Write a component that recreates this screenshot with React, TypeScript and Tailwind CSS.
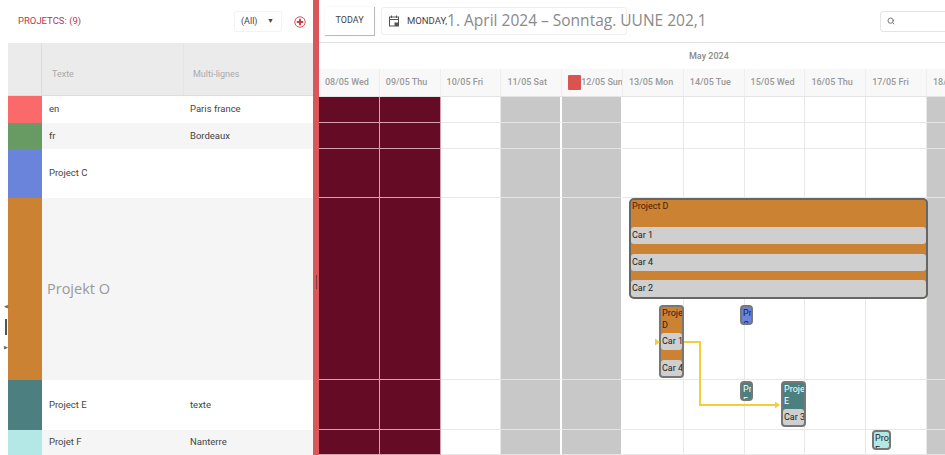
import { Search } from "lucide-react";

const rows = [
  { color: "bg-[#fb6a6a]", height: "h-[27px]", name: "en", city: "Paris france", alt: false },
  { color: "bg-[#689a64]", height: "h-[26px]", name: "fr", city: "Bordeaux", alt: true },
  { color: "bg-[#6a84dc]", height: "h-[49px]", name: "Project C", city: "", alt: false },
  { color: "bg-[#cc8233]", height: "h-[182px]", name: "Projekt O", city: "", alt: true, big: true },
  { color: "bg-[#4c7f80]", height: "h-[50px]", name: "Project E", city: "texte", alt: false },
  { color: "bg-[#b3e8e6]", height: "h-[25px]", name: "Projet F", city: "Nanterre", alt: true },
];

const days = [
  { label: "08/05 Wed", kind: "off" },
  { label: "09/05 Thu", kind: "off" },
  { label: "10/05 Fri", kind: "day" },
  { label: "11/05 Sat", kind: "weekend" },
  { label: "12/05 Sun", kind: "weekend", flag: true },
  { label: "13/05 Mon", kind: "day" },
  { label: "14/05 Tue", kind: "day" },
  { label: "15/05 Wed", kind: "day" },
  { label: "16/05 Thu", kind: "day" },
  { label: "17/05 Fri", kind: "day" },
  { label: "18/05 Sat", kind: "weekend" },
];

function Toolbar() {
  return (
    <div className="h-[43px] flex items-center border-b border-[#e2e2e2] pl-[6px]">
      <button className="h-[29px] w-[50px] border-r border-b border-[#bbb] text-[9px] text-[#444] shadow-[0_0_2px_#eee]">TODAY</button>
      <div className="ml-[6px] h-[28px] w-[246px] shrink-0 flex items-center border border-[#eee] rounded-[3px] pl-[6px] whitespace-nowrap overflow-visible">
        <svg width="12" height="12" viewBox="0 0 12 12" className="shrink-0 text-[#555]" fill="none" stroke="currentColor">
          <rect x="1.5" y="2" width="9" height="9" />
          <path d="M1.5 4.5h9M3.5 .5v2.5M8.5 .5v2.5" />
          <rect x="7" y="8" width="2.5" height="2.5" fill="currentColor" />
        </svg>
        <span className="ml-[7px] text-[9.5px] text-[#444]">MONDAY,</span>
        <span className="text-[15.5px] text-[#8a8a8a] font-['Open_Sans',sans-serif]">1. April 2024 – Sonntag. UUNE 202,1</span>
      </div>
      <div className="ml-auto w-[66px] -mr-[1px] h-[21px] shrink-0 flex items-center border border-[#e4e4e4] rounded-l-[3px] pl-[6px]">
        <Search size={8} strokeWidth={3} className="text-[#777]" />
      </div>
    </div>
  );
}

function Tile({ className, title, light, items = [] }: { className: string; title: string; light?: boolean; items?: { label: string; top: string }[] }) {
  return (
    <div className={`absolute overflow-hidden rounded-[4px] border-2 border-[#777] text-[9px] leading-[12px] ${light ? "text-white" : "text-[#222]"} ${className}`}>
      <div className="pl-[1px]">{title}</div>
      {items.map((item) => (
        <div key={item.label} className={`absolute left-0 right-0 h-[17px] rounded-[3px] bg-[#cfcfcf] pl-[1px] leading-[17px] whitespace-nowrap text-[#222] ${item.top}`}>
          {item.label}
        </div>
      ))}
    </div>
  );
}

function Timeline() {
  return (
    <div className="relative flex-1 overflow-hidden">
      <div className="h-[26px] pl-[370px] leading-[26px] text-[9px] font-medium text-[#888]">May 2024</div>
      <div className="flex h-[28px] w-[680px] bg-[#f8f8f8] border-b border-[#e4e4e4]">
        {days.map((day) => (
          <div
            key={day.label}
            className={`relative w-[60.8px] shrink-0 border-r border-[#eee] whitespace-nowrap leading-[27px] text-[9px] font-medium text-[#999] overflow-hidden ${day.flag ? "pl-[19px]" : "pl-[6px]"}`}
          >
            {day.flag && <span className="absolute left-[6px] top-[6px] h-[15px] w-[13px] rounded-[1px] bg-[#d9534f]" />}
            {day.label}
          </div>
        ))}
      </div>
      <div className="w-[680px]">
        {rows.map((row, i) => (
          <div key={row.name} className={`flex ${i === 0 ? "h-[26px]" : row.height}`}>
            {days.map((day) => (
              <div
                key={day.label}
                className={`w-[60.8px] shrink-0 ${
                  day.kind === "off"
                    ? "bg-[#660b26] border-r border-b border-[#d5a3b0]"
                    : day.kind === "weekend"
                      ? "bg-[#c8c8c8] border-r-2 border-b border-r-white border-b-[#e4e4e4]"
                      : "border-r border-b border-[#e8e8e8]"
                }`}
              />
            ))}
          </div>
        ))}
      </div>

      <div className="absolute left-[310px] top-[155px] h-[101px] w-[299px] overflow-hidden rounded-[5px] border-2 border-[#666] bg-[#cc8233] text-[9px] text-[#222]">
        <div className="h-[27px] pl-[1px] text-[#4a1c00] leading-[12px]">Project D</div>
        <div className="flex flex-col gap-[9.5px]">
          <div className="h-[17px] rounded-[3px] bg-[#cfcfcf] pl-[1px] leading-[17px]">Car 1</div>
          <div className="h-[17px] rounded-[3px] bg-[#cfcfcf] pl-[1px] leading-[17px]">Car 4</div>
          <div className="h-[17px] rounded-[3px] bg-[#cfcfcf] pl-[1px] leading-[17px]">Car 2</div>
        </div>
      </div>

      <Tile
        className="left-[340px] top-[262px] h-[73px] w-[25px] bg-[#cc8233]"
        title="Project D"
        items={[
          { label: "Car 1", top: "top-[26px]" },
          { label: "Car 4", top: "top-[53px]" },
        ]}
      />
      <Tile className="left-[421px] top-[262px] h-[20px] w-[13px] bg-[#6a84dc]" title="Proj C" />
      <Tile className="left-[421px] top-[338px] h-[20px] w-[13px] bg-[#4c7f80]" title="Proj F" light />
      <Tile className="left-[462px] top-[338px] h-[46px] w-[25px] bg-[#4c7f80]" title="Project E" light items={[{ label: "Car 3", top: "top-[26px]" }]} />
      <Tile className="left-[553px] top-[387px] h-[20px] w-[19px] bg-[#b3e8e6]" title="Proj F" />

      <svg className="absolute left-[330px] top-[292px]" width="135" height="75" viewBox="0 0 135 75" fill="none">
        <path d="M35 7h16v63h79" stroke="#f4cd3a" strokeWidth="2" />
        <path d="M6 3.5l5 3.5-5 3.5zM126 66.5l5 3.5-5 3.5z" fill="#f4cd3a" />
      </svg>
    </div>
  );
}

export default function App() {
  return (
    <div className="flex h-[455px] w-[945px] overflow-hidden bg-white font-['Roboto',sans-serif]">
      <div className="relative w-[313px] shrink-0 pl-[8px]">
        <div className="h-[43px] flex items-center pl-[10px] pr-[7px]">
          <span className="text-[9.5px] text-[#b5384e]">PROJETCS: (9)</span>
          <div className="ml-auto flex h-[21px] w-[48px] items-center justify-between rounded-[2px] border border-[#f3f3f3] pl-[6px] pr-[7px] text-[9px] text-[#444]">
            <span>(All)</span>
            <span className="text-[7px]">▼</span>
          </div>
          <svg className="ml-[12px]" width="12" height="12" viewBox="0 0 12 12" fill="none">
            <circle cx="6" cy="6" r="5.2" stroke="#d9534f" />
            <path d="M6 2.8v6.4M2.8 6h6.4" stroke="#c8404c" strokeWidth="2" />
          </svg>
        </div>
        <div className="flex h-[53px] border-b border-[#ddd] bg-[#ebebeb] text-[9px] text-[#aaa]">
          <div className="w-[34px] border-r border-[#ddd]" />
          <div className="w-[142px] border-r border-[#e4e4e4] pl-[10px] leading-[62px]">Texte</div>
          <div className="pl-[9px] leading-[62px]">Multi-lignes</div>
        </div>
        {rows.map((row) => (
          <div key={row.name} className={`flex items-center text-[9.5px] text-[#444] ${row.height} ${row.alt ? "bg-[#f5f5f5]" : "bg-white"}`}>
            <div className={`h-full w-[34px] shrink-0 ${row.color}`} />
            {row.big ? (
              <div className="pl-[5px] text-[14.5px] text-[#999] font-['Open_Sans',sans-serif]">{row.name}</div>
            ) : (
              <>
                <div className="w-[141px] pl-[7px]">{row.name}</div>
                <div className="pl-[7px]">{row.city}</div>
              </>
            )}
          </div>
        ))}
        <div className="absolute left-[4px] top-[303px] text-[5px] text-[#666]">◀</div>
        <div className="absolute left-[5px] top-[319px] h-[16px] w-[2px] bg-[#555]" />
        <div className="absolute left-[4px] top-[344px] text-[5px] text-[#666]">▶</div>
      </div>
      <div className="relative w-[6px] shrink-0 bg-[#d9565a]">
        <div className="absolute left-[3px] top-[275px] h-[14px] w-[1px] bg-[#8a3a3e]" />
      </div>
      <div className="flex flex-1 flex-col overflow-hidden">
        <Toolbar />
        <Timeline />
      </div>
    </div>
  );
}
